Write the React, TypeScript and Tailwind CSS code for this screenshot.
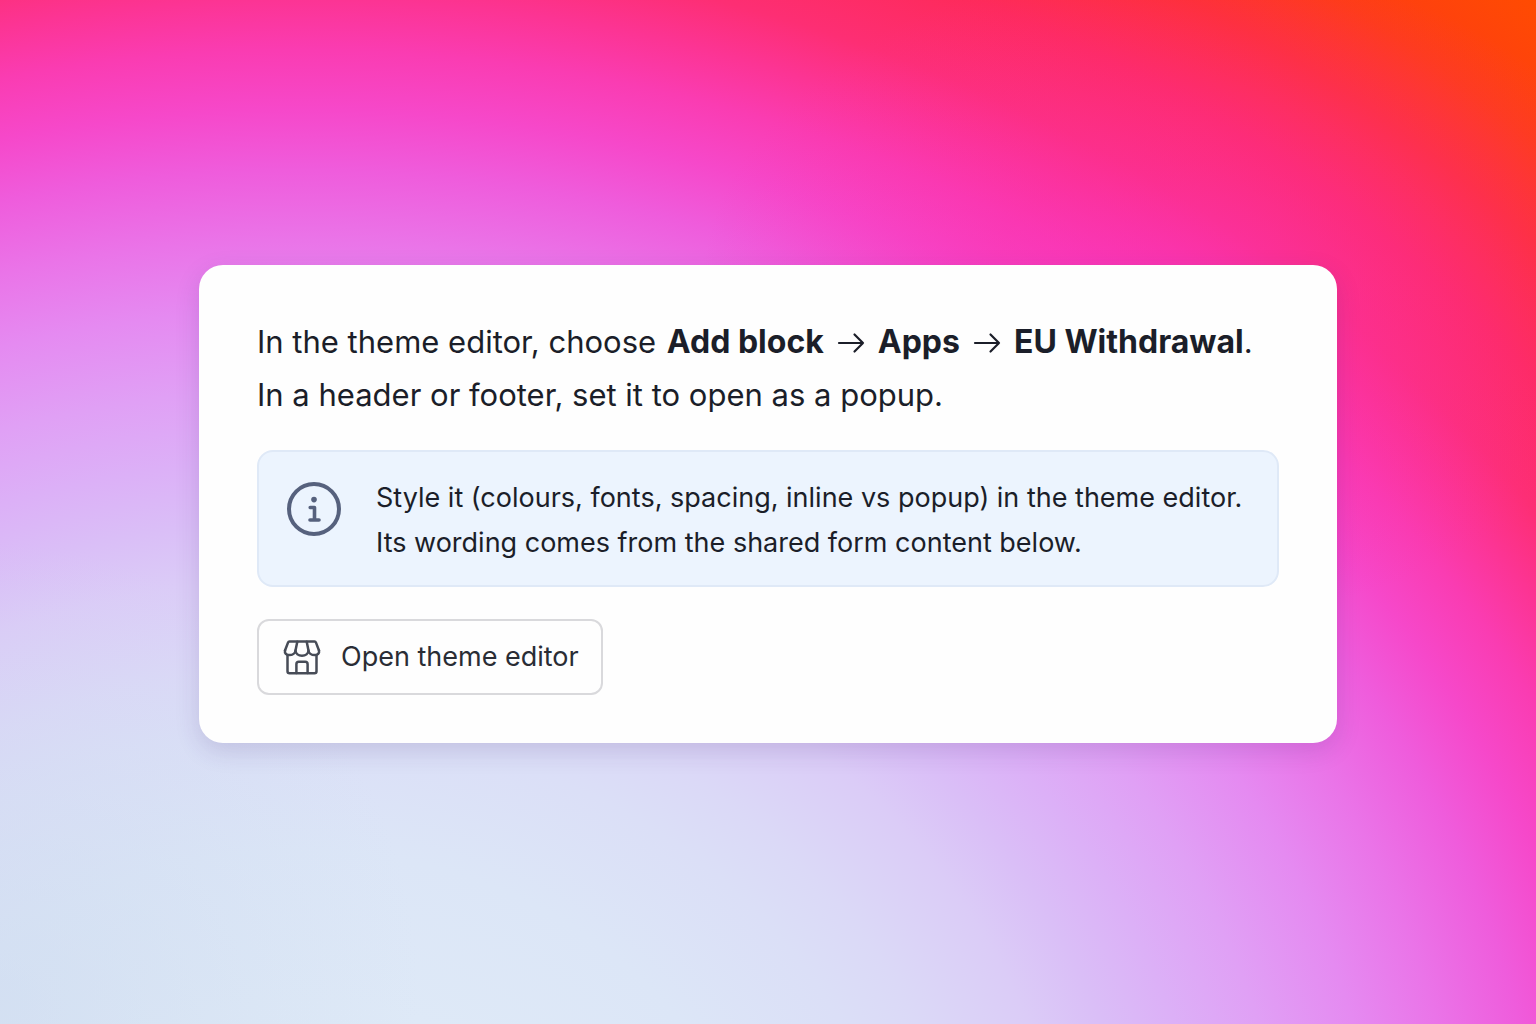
function InfoIcon() {
  return (
    <svg viewBox="0 0 56 56" fill="none" className="mt-1.5 size-14 shrink-0 text-[#56617d]" aria-hidden="true">
      <circle cx="28" cy="28" r="25" stroke="currentColor" strokeWidth="4" />
      <circle cx="28" cy="18.6" r="2.8" fill="currentColor" />
      <path d="M24.200 26.500h4.300v12.300M24 39h9" stroke="currentColor" strokeWidth="3.6" strokeLinecap="round" strokeLinejoin="round" />
    </svg>
  );
}

function StoreIcon() {
  return (
    <svg viewBox="0 0 38 38" fill="none" stroke="currentColor" strokeWidth="2.5" strokeLinecap="round" strokeLinejoin="round" className="size-[38px] shrink-0 text-[#474c57]" aria-hidden="true">
      <path d="M2 12.500l3-7.900a1.600 1.600 0 0 1 1.500-1h25a1.600 1.600 0 0 1 1.500 1l3 7.900" />
      <path d="M2 12.500c-.6 2.600 1.400 4.600 4.300 4.600 3.300 0 6-2.100 6.200-4.600.2 2.900 2.900 5.200 6.500 5.200s6.300-2.300 6.500-5.200c.2 2.500 2.900 4.600 6.200 4.600 2.900 0 4.900-2 4.300-4.600" />
      <path d="M14.300 3.800l-1.800 8.700M23.700 3.800l1.800 8.700" />
      <path d="M4.500 17v16.200a2 2 0 0 0 2 2h25a2 2 0 0 0 2-2V17" />
      <path d="M13.400 35v-8.800a2.400 2.400 0 0 1 2.400-2.400h6.400a2.400 2.400 0 0 1 2.400 2.400V35" />
    </svg>
  );
}

function ArrowIcon() {
  return (
    <svg viewBox="0 0 28 24" fill="none" stroke="currentColor" strokeWidth="2.2" strokeLinecap="round" strokeLinejoin="round" className="mx-[13px] inline-block h-6 w-7 align-[-2px]" role="img" aria-label="then">
      <path d="M2 12h24M17.500 3.500l8.500 8.500-8.500 8.500" />
    </svg>
  );
}

export default function App() {
  return (
    <main className="flex min-h-screen items-center justify-center bg-[radial-gradient(420px_460px_at_0px_1000px,rgba(200,215,236,0.45),rgba(200,215,236,0)),radial-gradient(480px_330px_at_1180px_290px,rgba(248,52,196,0.6),rgba(250,48,180,0.4)_40%,rgba(250,48,170,0)),radial-gradient(1155px_1000px_at_300px_1250px,#dfebf8_0%,#dee9f7_25%,#dce6f7_40%,#dbdff7_52%,#dbd9f7_58%,#dbccf7_67%,#dabef7_73%,#dcb0f7_79%,#e0a0f5_86%,#e58af1_94%,#ea74e8_101%,#ef5cdc_108%,#f648ca_114%,#fa3cb2_120%,#fc3494_125%,#fd2e74_130%,#fe2a5a_138%,#fe3030_147%,#fe3c14_154%,#ff4c00_165%)] px-4 pb-4 font-['Inter','Liberation_Sans',sans-serif] text-[#1b1e29]">
      <section className="w-full max-w-[1138px] rounded-3xl bg-[#fefefe] px-[58px] pt-[50px] pb-12 shadow-[0_8px_24px_rgba(60,40,120,0.16)]">
        <p className="text-[31px] leading-[53px]">
          In the theme editor, choose <strong className="ml-0.5 text-[32px] leading-none font-bold">Add block</strong>
          <ArrowIcon />
          <strong className="text-[32px] leading-none font-bold">Apps</strong>
          <ArrowIcon />
          <strong className="text-[32px] leading-none font-bold">EU Withdrawal</strong>.
          <br />
          In a header or footer, set it to open as a popup.
        </p>
        <div role="note" className="mt-[29px] flex gap-[34px] rounded-2xl border-2 border-[#dfe9f7] bg-[#ecf4fe] px-[27px] pt-[23px] pb-5">
          <InfoIcon />
          <p className="text-[27px] leading-[45px]">
            Style it (colours, fonts, spacing, inline vs popup) in the theme editor.
            <br />
            Its wording comes from the shared form content below.
          </p>
        </div>
        <button type="button" className="mt-8 flex h-[76px] items-center gap-5 rounded-xl border-2 border-[#d9d9dc] bg-[#fefefe] pr-[22px] pl-6 text-[27px] text-[#2a2d35]">
          <StoreIcon />
          Open theme editor
        </button>
      </section>
    </main>
  );
}
